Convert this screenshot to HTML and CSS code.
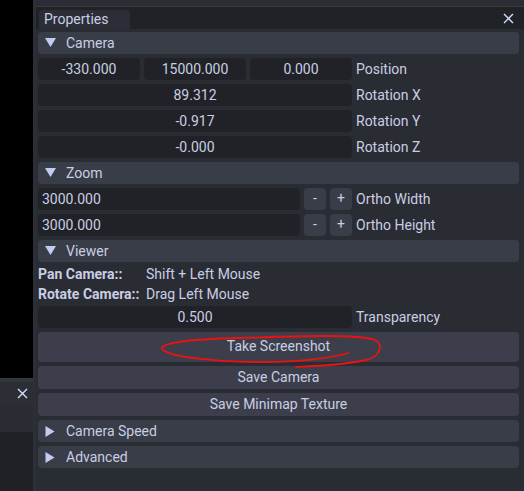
FILE: index.html
```html
<!DOCTYPE html>
<html>
<head>
<meta charset="utf-8">
<link rel="stylesheet" href="styles.css">
</head>
<body>
<div class="app">
  <div class="left">
    <div class="viewport"></div>
    <div class="dock">
      <div class="dock-sep"></div>
      <div class="dock-tabbar">
        <svg class="xicon" width="11" height="11" viewBox="0 0 11 11"><path d="M1 1L10 10M10 1L1 10"/></svg>
      </div>
      <div class="dock-body"></div>
      <div class="dock-bottom"></div>
    </div>
  </div>
  <div class="splitter"></div>
  <div class="panel">
    <div class="topstrip"></div>
    <div class="tabbar">
      <div class="tab">Properties</div>
      <svg class="xicon" width="11" height="11" viewBox="0 0 11 11"><path d="M1 1L10 10M10 1L1 10"/></svg>
    </div>
    <div class="content">
      <div class="header"><svg class="tri" width="11" height="10" viewBox="0 0 11 10"><polygon points="0,0 11,0 5.5,9"/></svg><span>Camera</span></div>
      <div class="row">
        <div class="field w3">-330.000</div>
        <div class="field w3">15000.000</div>
        <div class="field w3">0.000</div>
        <span class="label">Position</span>
      </div>
      <div class="row"><div class="field wfull">89.312</div><span class="label">Rotation X</span></div>
      <div class="row"><div class="field wfull">-0.917</div><span class="label">Rotation Y</span></div>
      <div class="row"><div class="field wfull">-0.000</div><span class="label">Rotation Z</span></div>

      <div class="header"><svg class="tri" width="11" height="10" viewBox="0 0 11 10"><polygon points="0,0 11,0 5.5,9"/></svg><span>Zoom</span></div>
      <div class="row">
        <div class="field wzoom left-text">3000.000</div>
        <div class="step">-</div>
        <div class="step">+</div>
        <span class="label">Ortho Width</span>
      </div>
      <div class="row">
        <div class="field wzoom left-text">3000.000</div>
        <div class="step">-</div>
        <div class="step">+</div>
        <span class="label">Ortho Height</span>
      </div>

      <div class="header"><svg class="tri" width="11" height="10" viewBox="0 0 11 10"><polygon points="0,0 11,0 5.5,9"/></svg><span>Viewer</span></div>
      <div class="kv"><b>Pan Camera::</b><span>Shift + Left Mouse</span></div>
      <div class="kv"><b>Rotate Camera::</b><span>Drag Left Mouse</span></div>
      <div class="row"><div class="field wfull">0.500</div><span class="label">Transparency</span></div>
      <div class="button tall">Take Screenshot</div>
      <div class="button">Save Camera</div>
      <div class="button">Save Minimap Texture</div>
      <div class="header"><svg class="tri" width="10" height="11" viewBox="0 0 10 11"><polygon points="0,0 0,11 9,5.5"/></svg><span>Camera Speed</span></div>
      <div class="header"><svg class="tri" width="10" height="11" viewBox="0 0 10 11"><polygon points="0,0 0,11 9,5.5"/></svg><span>Advanced</span></div>
    </div>
  </div>
</div>
<svg class="scribble" width="524" height="491" viewBox="0 0 524 491">
  <path d="M348 353 C332 358 300 362 262 362 C215 362 172 357 163 350 C156 344 185 339 240 338 C300 336 358 334 375 340 C384 345 380 357 366 360 C345 365 315 366 296 367"/>
</svg>
</body>
</html>
```
FILE: styles.css
```css
html, body {
  margin: 0;
  padding: 0;
  background: #000;
}
body {
  font-family: Roboto, "Liberation Sans", sans-serif;
  font-size: 14px;
  color: #c9cee4;
  width: 524px;
  height: 491px;
  overflow: hidden;
  position: relative;
}
.app {
  display: grid;
  grid-template-columns: 33px 3px 1fr;
  height: 491px;
}
.left {
  display: flex;
  flex-direction: column;
}
.viewport {
  height: 378px;
  background: #000;
}
.dock {
  flex: 1;
  display: flex;
  flex-direction: column;
}
.dock-sep {
  height: 4px;
  background: #33363d;
}
.dock-tabbar {
  height: 23px;
  background: #2b2e35;
  display: flex;
  align-items: center;
  justify-content: flex-end;
  padding-right: 5px;
}
.dock-body {
  height: 27px;
  background: #292c33;
}
.dock-bottom {
  flex: 1;
  background: #1f2126;
}
.splitter {
  background: #2c2f36;
}
.xicon path {
  stroke: #d8dcff;
  stroke-width: 1.4;
  fill: none;
}
.panel {
  background: #292c33;
  display: flex;
  flex-direction: column;
}
.topstrip {
  height: 6px;
  background: #2a2d34;
  border-bottom: 1px solid #3b3935;
}
.tabbar {
  height: 22px;
  background: #1f2227;
  display: flex;
  align-items: flex-end;
  justify-content: space-between;
  padding-left: 3px;
  padding-right: 10px;
}
.tabbar .xicon {
  align-self: center;
}
.tab {
  width: 86px;
  height: 19px;
  padding-left: 5px;
  background: #2b2e36;
  border-radius: 4px 4px 0 0;
  line-height: 19px;
}
.content {
  display: flex;
  flex-direction: column;
  gap: 4px;
  padding: 3px 5px 0 2px;
}
.header {
  height: 22px;
  background: #393d47;
  border-radius: 4px;
  display: flex;
  align-items: center;
}
.header .tri {
  margin-left: 7px;
  width: 11px;
  margin-right: 10px;
}
.tri polygon {
  fill: #c3cbf4;
}
.row {
  display: flex;
  gap: 4px;
  height: 22px;
  align-items: center;
}
.field {
  height: 22px;
  line-height: 22px;
  background: #202227;
  border-radius: 4px;
  text-align: center;
  box-sizing: border-box;
}
.w3 { width: 102px; }
.wfull { width: 314px; }
.wzoom { width: 262px; }
.left-text {
  text-align: left;
  padding-left: 4px;
}
.step {
  width: 22px;
  height: 22px;
  line-height: 21px;
  background: #393d47;
  border-radius: 4px;
  text-align: center;
}
.label {
  line-height: 22px;
}
.kv {
  display: grid;
  grid-template-columns: 108px 1fr;
  height: 16px;
  line-height: 16px;
}
.kv b {
  font-weight: 700;
}
.button {
  height: 23px;
  line-height: 23px;
  background: #3c3f4b;
  border-radius: 4px;
  text-align: center;
}
.button.tall {
  height: 30px;
  line-height: 29px;
}
.scribble {
  position: absolute;
  left: 0;
  top: 0;
  pointer-events: none;
}
.scribble path {
  fill: none;
  stroke: #ee1111;
  stroke-width: 1.8;
  stroke-linecap: round;
}
```
